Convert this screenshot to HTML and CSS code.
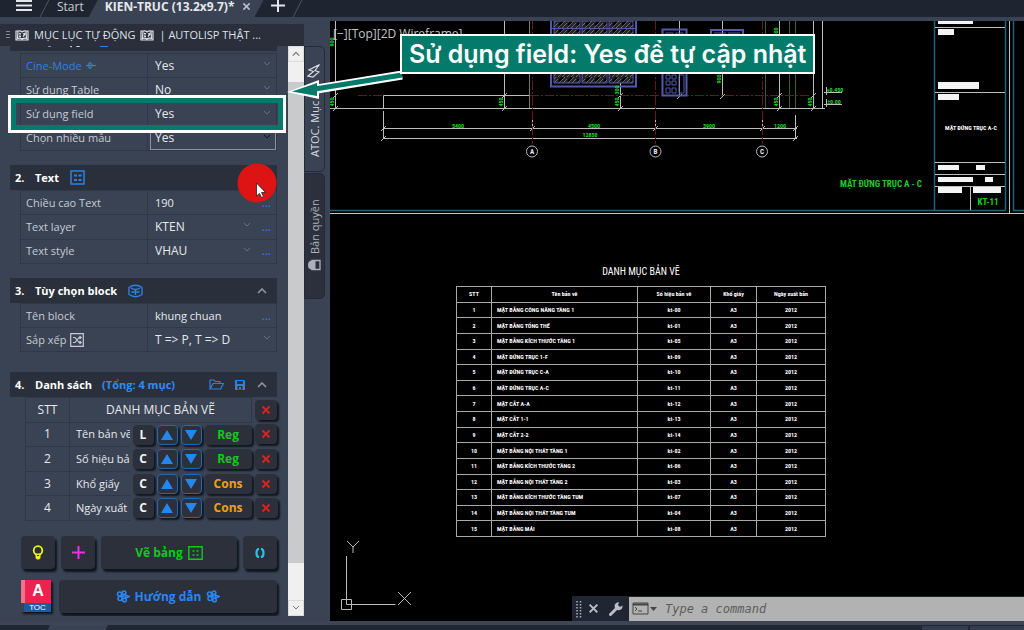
FILE: index.html
```html
<!DOCTYPE html>
<html lang="vi">
<head>
<meta charset="utf-8">
<title>KIEN-TRUC</title>
<link rel="stylesheet" href="styles.css">
</head>
<body>
<svg class="defs" aria-hidden="true">
  <defs>
    <symbol id="chev" viewBox="0 0 8 6"><path d="M1 1l3 3 3-3" fill="none" stroke="currentColor"/></symbol>
    <symbol id="chevup" viewBox="0 0 10 6"><path d="M1 5l4-4 4 4" fill="none" stroke="currentColor" stroke-width="1.6"/></symbol>
    <symbol id="triup" viewBox="0 0 12 10"><path d="M6 0l6 10H0z" fill="currentColor"/></symbol>
    <symbol id="tridown" viewBox="0 0 12 10"><path d="M0 0h12L6 10z" fill="currentColor"/></symbol>
    <symbol id="book" viewBox="0 0 14 12"><path d="M1 1.500h2M11 1.500h2M1 1v9.500h12V1M2.500 9L3 1.500Q6 1 7 2.500Q9 1 11 1.500L11.500 9Q9 8 7 9.500Q5 8 2.500 9z" fill="none" stroke="currentColor" stroke-width="1.200"/><path d="M4 4l2 .5M4 6.500l2 .5M8 4.500l2.500-1M8 7l2.500-3" stroke="currentColor" stroke-width="1.300"/></symbol>
    <symbol id="cross" viewBox="0 0 10 10"><path d="M1.500 1.500l7 7M8.500 1.500l-7 7" stroke="currentColor" stroke-width="1.800"/></symbol>
    <symbol id="flower" viewBox="0 0 14 13"><g fill="none" stroke="currentColor" stroke-width="1.600"><circle cx="3.500" cy="4" r="2"/><circle cx="8" cy="2.800" r="1.800"/><circle cx="4" cy="8.500" r="2"/><circle cx="8.500" cy="10" r="1.800"/><path d="M9 5l4 1.500L9.500 8z"/></g><circle cx="6.500" cy="6.300" r="1.500" fill="currentColor"/></symbol>
  </defs>
</svg>
<div class="app">
  <header class="filetabs">
    <button class="menu" aria-label="Menu"><svg width="16" height="12"><path d="M0 1h16M0 5.500h16M0 10h16" stroke="#e3e6ea" stroke-width="2"/></svg></button>
    <span class="slash"></span>
    <button class="tab">Start</button>
    <div class="tab-active"><b>KIEN-TRUC (13.2x9.7)*</b><button class="close" aria-label="Đóng"><svg width="9" height="9" viewBox="0 0 10 10"><use href="#cross"/></svg></button></div>
    <button class="add" aria-label="Thêm"><svg width="14" height="12"><path d="M7 0v12M0 5.500h14" stroke="#e3e6ea" stroke-width="2"/></svg></button>
    <span class="slash"></span>
  </header>

  <main class="work">
    <section class="palette">
      <h1 class="palette-title"><span class="grip"></span><svg width="14" height="13"><use href="#book"/></svg><span>MỤC LỤC TỰ ĐỘNG</span><svg width="14" height="13"><use href="#book"/></svg><span>| AUTOLISP THẬT ...</span></h1>
      <div class="palette-view">
        <div class="palette-body">
          <div class="cut"><svg width="110" height="4"><path d="M38 0h3M60 0l2 1M66 0q2 1 4 0" stroke="#e8ebef" fill="none"/><path d="M90 0h8" stroke="#2f80e8" stroke-width="2"/></svg></div>
          <div class="props four">
            <div class="row"><label for="f1" class="blue">Cine-Mode <svg width="11" height="9"><path d="M0 4.500h10M4 1v7l3-3.500zM4 1L1.500 4.500 4 8" fill="none" stroke="currentColor"/></svg></label><div class="val"><select id="f1"><option>Yes</option></select><svg class="chev" width="8" height="6"><use href="#chev"/></svg></div></div>
            <div class="row"><label for="f2">Sử dụng Table</label><div class="val"><select id="f2"><option>No</option></select><svg class="chev" width="8" height="6"><use href="#chev"/></svg></div></div>
            <div class="row"><label for="f3">Sử dụng field</label><div class="val"><select id="f3"><option>Yes</option></select><svg class="chev" width="8" height="6"><use href="#chev"/></svg></div></div>
            <div class="row"><label for="f4">Chọn nhiều mẫu</label><div class="val focus"><select id="f4"><option>Yes</option></select><svg class="chev" width="8" height="6"><use href="#chev"/></svg></div></div>
          </div>

          <h2 class="head"><span class="num">2.</span><span>Text</span><svg class="blue" width="15" height="15"><path d="M1 1h13v13H1z" fill="none" stroke="currentColor" stroke-width="1.500"/><path d="M4 5.500h3M8.500 5.500h3M4 10h3M8.500 10h3" stroke="currentColor" stroke-width="2"/></svg></h2>
          <div class="props three">
            <div class="row"><label for="f5">Chiều cao Text</label><div class="val"><input id="f5" value="190"><button class="more">...</button></div></div>
            <div class="row"><label for="f6">Text layer</label><div class="val"><select id="f6"><option>KTEN</option></select><svg class="chev" width="8" height="6"><use href="#chev"/></svg><button class="more">...</button></div></div>
            <div class="row"><label for="f7">Text style</label><div class="val"><select id="f7"><option>VHAU</option></select><svg class="chev" width="8" height="6"><use href="#chev"/></svg><button class="more">...</button></div></div>
          </div>

          <h2 class="head"><span class="num">3.</span><span>Tùy chọn block</span><svg class="blue" width="15" height="14"><path d="M1 3.500Q7.500-1 14 3.500v7Q7.500 15 1 10.500zM3 4Q7.500 7 12 4M3.500 8h8M7.500 6v5" fill="none" stroke="currentColor" stroke-width="1.400"/></svg><svg class="up" width="10" height="6"><use href="#chevup"/></svg></h2>
          <div class="props two">
            <div class="row"><label for="f8">Tên block</label><div class="val"><input id="f8" value="khung chuan"><button class="more">...</button></div></div>
            <div class="row"><label for="f9">Sắp xếp <svg width="14" height="14"><path d="M.7.700h12.600v12.600H.7zM3 4.500h2l4 5h2M3 9.500h2l4-5h2M9.500 3l1.700 1.500L9.500 6M9.500 8l1.700 1.500-1.700 1.500" fill="none" stroke="currentColor" stroke-width="1.200"/></svg></label><div class="val"><select id="f9"><option>T =&gt; P, T =&gt; D</option></select><svg class="chev" width="8" height="6"><use href="#chev"/></svg></div></div>
          </div>

          <h2 class="head list-head"><span class="num">4.</span><span>Danh sách</span><span class="total">(Tổng: 4 mục)</span>
            <button class="ico open" aria-label="Mở"><svg width="15" height="11"><path d="M1 9.500V1h4l1 1.500h5V4M1 10l3-5.500h10.500L11.500 10z" fill="none" stroke="currentColor" stroke-width="1.200"/></svg></button>
            <button class="ico" aria-label="Lưu"><svg width="10" height="10"><path d="M0 0h9l1 1v9H0z" fill="currentColor"/><path d="M2 1h6v3H2zM2.500 6h5v3.500h-5z" fill="#2a303b"/><path d="M4 7h2v2H4z" fill="currentColor"/></svg></button>
            <svg class="up" width="10" height="6"><use href="#chevup"/></svg></h2>
          <table class="items">
            <colgroup><col class="c-stt"><col class="c-name"><col class="c-sm"><col class="c-sm"><col class="c-sm"><col class="c-reg"><col class="c-x"></colgroup>
            <tr><th>STT</th><th colspan="5">DANH MỤC BẢN VẼ</th><td class="act"><button class="k x" aria-label="Xóa"><svg width="10" height="10"><use href="#cross"/></svg></button></td></tr>
            <tr><td>1</td><td class="name"><span>Tên bản vẽ</span></td><td class="act"><button class="k">L</button></td><td class="act"><button class="k mv" aria-label="Lên"><svg width="12" height="10"><use href="#triup"/></svg></button></td><td class="act"><button class="k mv" aria-label="Xuống"><svg width="12" height="10"><use href="#tridown"/></svg></button></td><td class="act"><button class="k reg">Reg</button></td><td class="act"><button class="k x" aria-label="Xóa"><svg width="10" height="10"><use href="#cross"/></svg></button></td></tr>
            <tr><td>2</td><td class="name"><span>Số hiệu bản</span></td><td class="act"><button class="k">C</button></td><td class="act"><button class="k mv" aria-label="Lên"><svg width="12" height="10"><use href="#triup"/></svg></button></td><td class="act"><button class="k mv" aria-label="Xuống"><svg width="12" height="10"><use href="#tridown"/></svg></button></td><td class="act"><button class="k reg">Reg</button></td><td class="act"><button class="k x" aria-label="Xóa"><svg width="10" height="10"><use href="#cross"/></svg></button></td></tr>
            <tr><td>3</td><td class="name"><span>Khổ giấy</span></td><td class="act"><button class="k">C</button></td><td class="act"><button class="k mv" aria-label="Lên"><svg width="12" height="10"><use href="#triup"/></svg></button></td><td class="act"><button class="k mv" aria-label="Xuống"><svg width="12" height="10"><use href="#tridown"/></svg></button></td><td class="act"><button class="k cons">Cons</button></td><td class="act"><button class="k x" aria-label="Xóa"><svg width="10" height="10"><use href="#cross"/></svg></button></td></tr>
            <tr><td>4</td><td class="name"><span>Ngày xuất</span></td><td class="act"><button class="k">C</button></td><td class="act"><button class="k mv" aria-label="Lên"><svg width="12" height="10"><use href="#triup"/></svg></button></td><td class="act"><button class="k mv" aria-label="Xuống"><svg width="12" height="10"><use href="#tridown"/></svg></button></td><td class="act"><button class="k cons">Cons</button></td><td class="act"><button class="k x" aria-label="Xóa"><svg width="10" height="10"><use href="#cross"/></svg></button></td></tr>
          </table>

          <div class="bar">
            <button class="big sq" aria-label="Gợi ý"><svg width="12" height="15"><circle cx="6" cy="5.500" r="4.300" fill="none" stroke="#f4ee2a" stroke-width="1.800"/><path d="M3.500 8.500h5V13l-1.500 1.500H5L3.500 13z" fill="#f4ee2a"/><path d="M5 10.500h2" stroke="#2a303b"/></svg></button>
            <button class="big sq" aria-label="Thêm dòng"><svg width="13" height="13"><path d="M6.500 0v13M0 6.500h13" stroke="#ee2ee8" stroke-width="2"/></svg></button>
            <button class="big wide green">Vẽ bảng <svg width="15" height="14"><path d="M.8.800h13.400v12.400H.8z" fill="none" stroke="currentColor" stroke-width="1.400"/><path d="M4.500 4H6.500v2H4.500zM8.500 4h2v2h-2zM4.500 8h2v2h-2zM8.500 8h2v2h-2z" fill="currentColor" opacity=".75"/></svg></button>
            <button class="big sq" aria-label="Làm mới"><svg width="10" height="10"><path d="M4 1Q1.500 1 1.500 5t2.500 4M6 1q2.500 0 2.500 4T6 9" fill="none" stroke="#23c3e8" stroke-width="2.200"/></svg></button>
          </div>
          <div class="bar second">
            <div class="logo"><b>A</b><span>TOC</span></div>
            <button class="big wide azure"><svg width="14" height="13"><use href="#flower"/></svg>Hướng dẫn<svg width="14" height="13"><use href="#flower"/></svg></button>
          </div>
        </div>
        <div class="scroll">
          <button aria-label="Cuộn lên"><svg width="8" height="6" viewBox="0 0 10 6"><use href="#chevup"/></svg></button>
          <div class="thumb"></div>
          <button aria-label="Cuộn xuống"><svg width="8" height="6" viewBox="0 0 8 6"><use href="#chev"/></svg></button>
        </div>
      </div>
    </section>

    <nav class="side">
      <button class="side-tab on"><span>ATOC. Mục lục</span><svg width="14" height="15"><path d="M8 1L2 6l4 1.500L1.500 13.500 12 8 7.500 6.500 13 2z" fill="none" stroke="currentColor" stroke-width="1.200"/></svg></button>
      <button class="side-tab"><svg width="14" height="12"><path d="M1 1.500h8v9H1z" fill="none" stroke="currentColor" stroke-width="1.300"/><path d="M9 1.500q4 0 4 4.500t-4 4.500H5.500v-9z" fill="currentColor"/></svg><span>Bản quyền</span></button>
    </nav>

    <section class="canvas">
      <svg class="drawing" role="img" aria-label="Bản vẽ">
        <defs>
          <pattern id="hatch" width="9" height="7" patternUnits="userSpaceOnUse"><rect width="9" height="7" fill="#242426"/><path d="M-1 8L8-1M3 8l7-7" stroke="#6c6c70"/><path d="M1 4l4-4" stroke="#000" stroke-width="2"/></pattern>
        </defs>
        <g transform="translate(-330 -21)">
          <g class="w">
            <path d="M335.500 21v88M504.500 21v88M779.500 21v88M813.500 21v88M822.500 21v88M383.500 108V95.500h146M330 108.500h495M383.500 111v28M383 128.500h414M383 138.500h414M532.500 111v19M655.500 111v19M762.500 115v15M795.500 115v24M620.500 74v35M679.500 21v76M722.500 21v76"/>
            <path d="M381 131l5-5M381 141l5-5M530 131l5-5M653 131l5-5M760 131l5-5M793 131l5-5M793 141l5-5M333 98l5-5M333 111l5-5M502 98l5-5M502 111l5-5M618 98l5-5M618 111l5-5M777 98l5-5M777 111l5-5M811 98l5-5M811 111l5-5M720 99l5-5M677 99l5-5"/>
            <path d="M824 92.500h18M824 104.500h18M826.500 87v8M826.500 99v8"/>
          </g>
          <path d="M529.500 21v87" stroke="#777"/>
          <path d="M765.500 21v87M789.500 21v87M795.500 21v87" stroke="#345c4c"/>
          <g stroke="#6b1422" stroke-dasharray="9 2 2 2"><path d="M532.500 21v123M655.500 21v123M762.500 21v123M358 95.500h24M530 95.500h280"/></g>
          <g stroke="#5359a8" fill="none">
            <path d="M551 21v65.500h85V21" stroke-width="2"/><path d="M554 21h26v62h-26zM582 21h25v62h-25zM609 21h24v62h-24z" fill="url(#hatch)"/><path d="M552 28.500h83"/>
            <path d="M662.500 29.500h24v66h-24z" stroke-width="2"/><path d="M666 33h7v5h-7zM676 33h7v5h-7zM666 75h4v4h-4zM672 75h4v4h-4zM666 81h4v4h-4zM672 81h4v4h-4zM666 88h4v5h-4zM672 88h4v5h-4zM679 75h5v18h-5z"/>
            <path d="M711 34v-4h32v4" stroke-width="2"/><path d="M714 33h12M728 33h12"/>
          </g>
          <g class="w"><circle cx="532" cy="151.500" r="5.500"/><circle cx="655.500" cy="151.500" r="5.500"/><circle cx="762" cy="151.500" r="5.500"/></g>
          <g class="mark"><text x="532" y="154">A</text><text x="655.500" y="154">B</text><text x="762" y="154">C</text></g>
          <g class="dim">
            <text x="458" y="128">5400</text><text x="594" y="128">4500</text><text x="590" y="137">12850</text><text x="709" y="128">3900</text><text x="780" y="128">1200</text>
            <text transform="translate(503 102) rotate(-90)">450</text><text transform="translate(334 42) rotate(-90)">900</text><text transform="translate(334 102) rotate(-90)">450</text><text transform="translate(619 90) rotate(-90)">300</text><text transform="translate(619 102) rotate(-90)">450</text><text transform="translate(778 32) rotate(-90)">900</text><text transform="translate(778 102) rotate(-90)">450</text><text transform="translate(812 102) rotate(-90)">450</text><text transform="translate(721 79) rotate(-90)">900</text>
            <text x="835" y="92">+0.450</text><text x="834" y="104">±0.00</text>
          </g>
          <g stroke="#246178"><path d="M330 210.500h675.500M934.500 21v189.500M1005.500 21v189.500M1024 210.500h-10.500V21" fill="none" stroke-width="1.500"/></g>
          <path d="M330 213.500h694M1009.500 21v192" stroke="#c4c4c4"/>
          <path class="w" d="M935 27.500h70M935 92.500h70M935 162.500h70M935 174.500h70M935 186.500h70M970.500 187v23"/>
          <path fill="#f4f4f4" d="M938 21h35v3h-35zM938 29h16v6h-16zM938 82h41v7h-41zM938 94h21v6h-21zM938 165h21v5h-21zM976 165h9v5h-9zM938 177h35v5h-35zM985 177h8v5h-8zM938 187h24v6h-24zM973 187h28v6h-28z"/>
          <text class="cad tiny" x="971" y="130">MẶT ĐỨNG TRỤC A-C</text>
          <text class="cad lime" x="881" y="187">MẶT ĐỨNG TRỤC A - C</text>
          <text class="cad lime" x="988" y="205">KT-11</text>
          <g class="w"><path d="M346.500 556v48.500h49M341.500 599.500h10v10h-10zM347 541l6 6 6-6M353 547v6M398 592l13 13M411 592l-13 13"/></g>
        </g>
      </svg>
      <span class="viewlabel">[−][Top][2D Wireframe]</span>
      <table class="schedule">
        <caption>DANH MỤC BẢN VẼ</caption>
        <colgroup><col class="s1"><col class="s2"><col class="s3"><col class="s4"><col class="s5"></colgroup>
        <tr><th>STT</th><th>Tên bản vẽ</th><th>Số hiệu bản vẽ</th><th>Khổ giấy</th><th>Ngày xuất bản</th></tr>
        <tr><td>1</td><td>MẶT BẰNG CÔNG NĂNG TẦNG 1</td><td>kt-00</td><td>A3</td><td>2012</td></tr>
        <tr><td>2</td><td>MẶT BẰNG TỔNG THỂ</td><td>kt-01</td><td>A3</td><td>2012</td></tr>
        <tr><td>3</td><td>MẶT BẰNG KÍCH THƯỚC TẦNG 1</td><td>kt-05</td><td>A3</td><td>2012</td></tr>
        <tr><td>4</td><td>MẶT ĐỨNG TRỤC 1-F</td><td>kt-09</td><td>A3</td><td>2012</td></tr>
        <tr><td>5</td><td>MẶT ĐỨNG TRỤC C-A</td><td>kt-10</td><td>A3</td><td>2012</td></tr>
        <tr><td>6</td><td>MẶT ĐỨNG TRỤC A-C</td><td>kt-11</td><td>A3</td><td>2012</td></tr>
        <tr><td>7</td><td>MẶT CẮT A-A</td><td>kt-12</td><td>A3</td><td>2012</td></tr>
        <tr><td>8</td><td>MẶT CẮT 1-1</td><td>kt-13</td><td>A3</td><td>2012</td></tr>
        <tr><td>9</td><td>MẶT CẮT 2-2</td><td>kt-14</td><td>A3</td><td>2012</td></tr>
        <tr><td>10</td><td>MẶT BẰNG NỘI THẤT TẦNG 1</td><td>kt-02</td><td>A3</td><td>2012</td></tr>
        <tr><td>11</td><td>MẶT BẰNG KÍCH THƯỚC TẦNG 2</td><td>kt-06</td><td>A3</td><td>2012</td></tr>
        <tr><td>12</td><td>MẶT BẰNG NỘI THẤT TẦNG 2</td><td>kt-03</td><td>A3</td><td>2012</td></tr>
        <tr><td>13</td><td>MẶT BẰNG KÍCH THƯỚC TẦNG TUM</td><td>kt-07</td><td>A3</td><td>2012</td></tr>
        <tr><td>14</td><td>MẶT BẰNG NỘI THẤT TẦNG TUM</td><td>kt-04</td><td>A3</td><td>2012</td></tr>
        <tr><td>15</td><td>MẶT BẰNG MÁI</td><td>kt-08</td><td>A3</td><td>2012</td></tr>
      </table>
      <div class="command">
        <svg width="8" height="18"><path d="M2 1v17M5.500 1v17" stroke="#aab0b8" stroke-width="1.500" stroke-dasharray="1.500 1.500"/></svg>
        <button aria-label="Đóng"><svg width="11" height="11" viewBox="0 0 10 10"><use href="#cross"/></svg></button>
        <button aria-label="Tùy chỉnh"><svg width="15" height="15"><path d="M1.500 13.500L8 7" stroke="currentColor" stroke-width="3" stroke-linecap="round"/><path d="M13.500 4.500A4 4 0 1 1 10 1.200L9 4l2 2z" fill="currentColor"/></svg></button>
        <label class="prompt"><svg width="26" height="13"><path d="M1 1h15v11H1z" fill="none" stroke="#444"/><path d="M1 2.500h15" stroke="#444" stroke-width="2"/><path d="M3 5l2 2-2 2M6 9h4" fill="none" stroke="#444"/><path d="M18 5h7l-3.500 4z" fill="#444"/></svg><input placeholder="Type a command" aria-label="Lệnh"></label>
      </div>
    </section>
  </main>
  <footer class="status"><span class="lt"></span><span class="rt"></span><span class="rt last"></span></footer>

  <div class="focusbox"></div>
  <svg class="arrow" width="116" height="30"><path d="M115 4L30 18" stroke="#fff" stroke-width="9"/><path d="M0 21L32 9v19z" fill="#fff"/><path d="M115 4L28 18" stroke="#047a6b" stroke-width="5"/><path d="M5 20.500L30 12v13z" fill="#047a6b"/></svg>
  <div class="callout">Sử dụng field: Yes để tự cập nhật</div>
  <svg class="pointer" width="40" height="40"><circle cx="20" cy="20" r="19.500" fill="#de1414"/><path d="M19.500 20v13l3-2.500 2 4 2-1-2-4h4z" fill="#fff" stroke="#222" stroke-width=".8"/></svg>
</div>
</body>
</html>
```
FILE: styles.css
```css
* { box-sizing: border-box; }
body { margin: 0; background: #3a4353; font: 12px/16px "Open Sans", "Noto Sans", sans-serif; color: #e6e9ed; }
button, input, select { font: inherit; color: inherit; background: none; border: 0; padding: 0; margin: 0; appearance: none; outline: 0; }
svg { flex: none; display: block; }
.defs { position: absolute; width: 0; height: 0; }
.app { position: relative; display: flex; flex-direction: column; height: 100vh; overflow: hidden; }

.filetabs { display: flex; align-items: flex-start; height: 17px; background: #1f2530; padding-left: 16px; }
.menu { height: 12px; }
.slash { width: 1px; height: 17px; margin: 0 12px; background: #4c5563; transform: skewX(-27deg); }
.tab { line-height: 13px; white-space: nowrap; color: #c9ced6; }
.tab-active { display: flex; gap: 8px; height: 17px; margin-left: 5px; padding: 0 12px 0 16px; line-height: 13px; background: #3a4353; clip-path: polygon(9px 0, 100% 0, calc(100% - 9px) 100%, 0 100%); white-space: nowrap; }
.close { color: #b6bcc6; height: 12px; }
.add { height: 12px; margin-left: 8px; }

.work { flex: 1; display: flex; min-height: 0; padding-top: 4px; }
.palette { width: 304px; display: flex; flex-direction: column; padding: 3px 0 5px; }
.palette-title { display: flex; align-items: center; gap: 5px; margin: 0; height: 22px; padding-left: 6px; background: #2a2f3b; font-size: 11px; font-weight: 400; color: #dde1e6; white-space: nowrap; overflow: hidden; flex: none; }
.grip { width: 4px; height: 9px; background: repeating-linear-gradient(#818894 0 1px, transparent 1px 3px); }
.palette-view { flex: 1; display: flex; min-height: 0; }
.palette-body { flex: 1; padding: 0 11px 0 10px; overflow: hidden; }
.cut { height: 5px; background: #2a303b; margin-bottom: 2px; }
.props { display: grid; grid-auto-rows: 1fr; margin-left: 10px; border: solid #303847; border-width: 0 1px 1px; }
.four { min-height: 98px; }
.three { min-height: 74px; }
.two { min-height: 49px; }
.row { display: grid; grid-template-columns: 127px 1fr; border-top: 1px solid #303847; }
.row label { display: flex; align-items: center; gap: 4px; padding-left: 5px; font-size: 11px; color: #c6ccd5; border-right: 1px solid #303847; white-space: nowrap; }
.row .blue, .blue { color: #2f80e0; }
.val { display: flex; align-items: center; padding: 0 5px 0 7px; min-width: 0; }
.val select, .val input { flex: 1; min-width: 0; }
.val input { font-size: 11px; }
.focus { border: 1px solid #8a92a0; margin-left: 2px; padding: 0 4px; }
.chev { color: #667080; margin-bottom: 3px; }
.focus .chev { color: #10151d; }
.more { color: #2f80e0; width: 20px; text-align: right; }

.head { display: flex; align-items: center; margin: 14px 0 0; height: 25px; padding: 0 10px 0 5px; background: #2a303b; font-size: 11px; font-weight: 700; color: #fff; white-space: nowrap; }
.num { width: 20px; }
.head > .blue { margin-left: 11px; }
.up { margin-left: auto; color: #8f96a0; }
.list-head { margin-top: 20px; }
.total { color: #2f8cf5; margin-left: 10px; }
.ico { color: #2f80e0; }
.open { margin-left: auto; }
.ico + .ico { margin-left: 11px; }
.ico + .up { margin-left: 12px; }

.items { width: 252px; margin-left: 15px; border-collapse: collapse; table-layout: fixed; height: 124px; }
.items th, .items td { padding: 0; border: 1px solid #303847; text-align: center; font-weight: 400; overflow: hidden; white-space: nowrap; height: 24px; }
.items .name { text-align: left; padding-left: 6px; border-right: 0; font-size: 11px; }
.items .act { border: 0; padding-left: 3px; overflow: visible; }
.c-stt { width: 44px; } .c-name { width: 60px; } .c-sm { width: 24px; } .c-reg { width: 50px; } .c-x { width: 26px; }
.name span { display: block; overflow: hidden; }
.k { display: flex; align-items: center; justify-content: center; width: 100%; height: 20px; background: #2b303b; border-radius: 4px; box-shadow: 2px 2px 2px #11161f; font-weight: 700; color: #f2f4f6; }
.k.mv { border: 1px solid #2467ae; color: #2487ee; }
.k.reg { color: #16c61c; } .k.cons { color: #f0a01c; } .k.x { color: #e3201c; }

.bar { display: flex; gap: 6px; padding: 15px 0 0 11px; }
.second { padding-top: 11px; gap: 8px; }
.big { display: flex; align-items: center; justify-content: center; gap: 5px; height: 33px; background: #2b303b; border-radius: 4px; box-shadow: 2px 3px 2px #10151d; font-weight: 700; }
.sq { width: 34px; }
.wide { flex: 1; }
.green { color: #12c81c; }
.azure { color: #2a86f0; }
.logo { width: 30px; height: 32px; display: flex; flex-direction: column; text-align: center; color: #fff; box-shadow: 2px 2px 2px #10151d; font-family: "Liberation Sans", sans-serif; }
.logo b { flex: 1; background: #ea2350; border-left: 4px solid #f4708c; font-size: 16px; line-height: 22px; }
.logo span { margin-left: 3px; background: #1c5aa6; font-size: 8px; line-height: 9px; }

.scroll { width: 16px; background: #f0f0f0; display: flex; flex-direction: column; }
.scroll button { height: 16px; display: flex; align-items: center; justify-content: center; color: #777; background: #f0f0f0; border: 1px solid #dadada; }
.thumb { flex: 1; margin: 20px 0 37px; background: #c9cacb; }

.side { width: 26px; padding: 25px 5px 0 0; display: flex; flex-direction: column; gap: 1px; }
.side-tab { writing-mode: vertical-rl; transform: rotate(180deg); display: flex; align-items: center; gap: 5px; height: 126px; padding-top: 14px; border: 1px solid #252b36; border-radius: 5px 0 0 5px; background: #2b303c; color: #aab1bc; white-space: nowrap; font-size: 11px; line-height: 16px; }
.side-tab + .side-tab { padding-top: 27px; }
.side-tab.on { background: #3a4353; color: #d5dae0; }

.canvas { flex: 1; position: relative; background: #000; overflow: hidden; min-width: 0; }
.drawing { width: 100%; height: 100%; }
.w { stroke: #bdbdbd; fill: none; }
.cad, .dim, .mark { font-family: "Roboto Condensed", Roboto, "Liberation Sans", sans-serif; text-anchor: middle; }
.dim { font-size: 6px; font-weight: 700; fill: #22d62c; }
.mark { font-size: 7px; font-weight: 700; fill: #eee; }
.tiny { font-size: 6px; font-weight: 700; fill: #fff; }
.lime { font-size: 9px; font-weight: 700; fill: #1ecc28; }
.viewlabel { position: absolute; left: 3px; top: 5px; color: #c4c4c4; }
.schedule { position: absolute; left: 126px; top: 245px; width: 369px; height: 251px; border-collapse: collapse; table-layout: fixed; color: #fff; font: 700 6px/8px "Roboto Condensed", Roboto, "Liberation Sans", sans-serif; }
.schedule caption { font-size: 10px; line-height: 12px; font-weight: 400; padding-bottom: 8px; }
.schedule th, .schedule td { padding: 0; border: 1px solid #a9a9a9; text-align: center; white-space: nowrap; }
.schedule td:nth-child(2) { text-align: left; padding-left: 5px; }
.s1 { width: 35px; } .s2 { width: 146px; } .s3 { width: 73px; } .s4 { width: 46px; } .s5 { width: 69px; }
.command { position: absolute; left: 242px; right: 0; bottom: 0; height: 25px; display: flex; align-items: center; gap: 5px; padding-left: 3px; background: #1f2632; color: #b9bec6; }
.command button + button { margin-left: 5px; }
.prompt { flex: 1; height: 24px; display: flex; align-items: center; gap: 7px; padding-left: 3px; background: #b2b2b2; }
.prompt input { flex: 1; font: italic 12px/16px "DejaVu Sans Mono", monospace; }
.prompt input::placeholder { color: #5c5c5c; opacity: 1; }

.status { display: flex; height: 9px; border-top: 4px solid #3e4655; background: #1f2734; gap: 2px; }
.lt { width: 60px; margin-left: 48px; background: #3a4353; clip-path: polygon(2px 0, 100% 0, 96% 100%, 0 100%); }
.rt { width: 46px; margin: 1px 0 0 auto; background: #333d4d; }
.last { width: 54px; margin-left: 0; }

.focusbox { position: absolute; left: 8px; top: 95px; width: 278px; height: 38px; border: 3px solid #fff; box-shadow: inset 0 0 0 5px #047a6b; }
.arrow { position: absolute; left: 287px; top: 71px; }
.callout { position: absolute; left: 400px; top: 34px; height: 40px; padding: 0 7px; border: 2px solid #fff; background: #047a6b; color: #fff; font: 600 25px/36px Inter, sans-serif; white-space: nowrap; }
.pointer { position: absolute; left: 237px; top: 163px; }
```
